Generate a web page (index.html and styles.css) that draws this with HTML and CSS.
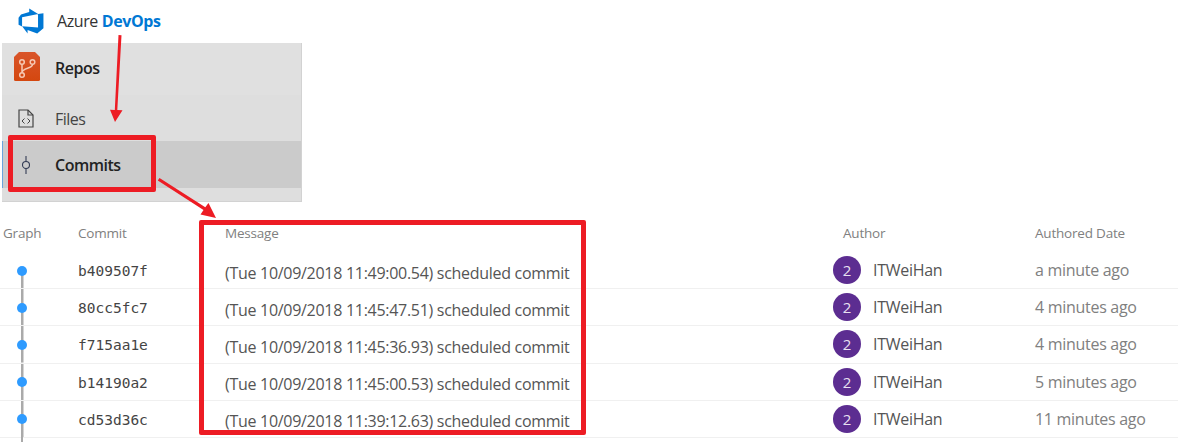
FILE: index.html
```html
<!DOCTYPE html>
<html lang="en">
<head>
<meta charset="utf-8">
<title>Azure DevOps commits</title>
<link rel="stylesheet" href="styles.css">
</head>
<body>
<header class="brand">
  <svg class="brand-logo" viewBox="0 0 18 18"><path fill="#0078d4" d="M17 4v9.74l-4 3.28-6.2-2.26V17l-3.51-4.59 10.23.8V4.44zm-3.41.49L7.85 1v2.29L2.58 4.84 1 6.87v4.61l2.26 1V6.57z"/></svg>
  <span class="brand-name">Azure <b>DevOps</b></span>
</header>
<nav class="nav">
  <div class="nav-item nav-repos">
    <svg class="repos-icon" viewBox="0 0 26 29">
      <defs><linearGradient id="repoFill" x1="0" y1="0" x2="0" y2="1"><stop offset="0" stop-color="#d9552a"/><stop offset="1" stop-color="#d4470f"/></linearGradient></defs>
      <path fill="url(#repoFill)" d="M5 0H21L26 5V27.500Q26 29 24.500 29H1.500Q0 29 0 27.500V5Z"/>
      <g fill="none" stroke="#f6c9b4" stroke-width="1.500">
        <circle cx="8" cy="10" r="2.300"/><circle cx="18.500" cy="10" r="2.300"/><circle cx="8" cy="23" r="2.300"/>
        <path d="M8 12.500V20.500M18.500 12.500C18.500 17 8.500 15.500 8 20.500"/>
      </g>
    </svg>
    <span class="nav-title">Repos</span>
  </div>
  <div class="nav-item nav-files">
    <svg class="files-icon" viewBox="0 0 16 19"><g fill="none" stroke="#444" stroke-width="1.200"><path d="M1 1H10L15 6V18H1Z"/><path d="M10 1V6H15"/><path d="M6.500 9.500L4 12L6.500 14.500M9.500 9.500L12 12L9.500 14.500" stroke-width="1"/></g></svg>
    <span class="nav-label">Files</span>
  </div>
  <div class="nav-item nav-commits">
    <svg class="commit-icon" viewBox="0 0 10 18"><g fill="none" stroke="#333c55" stroke-width="1.100"><circle cx="5" cy="9" r="3.500"/><path d="M5 0V5.500M5 12.500V18"/></g></svg>
    <span class="nav-current">Commits</span>
  </div>
  <div class="nav-foot"></div>
</nav>
<section class="commits">
  <div class="row head">
    <div class="c-graph"><span class="head-graph">Graph</span></div>
    <div class="c-commit head-font">Commit</div>
    <div class="c-message">Message</div>
    <div class="c-author"><span class="head-author">Author</span></div>
    <div class="c-date">Authored Date</div>
  </div>
  <div class="row item first">
    <div class="c-graph"><i class="dot"></i></div>
    <div class="c-commit">b409507f</div>
    <div class="c-message">(Tue 10/09/2018 11:49:00.54) scheduled commit</div>
    <div class="c-author"><span class="avatar">2</span>ITWeiHan</div>
    <div class="c-date">a minute ago</div>
  </div>
  <div class="row item">
    <div class="c-graph"><i class="dot"></i></div>
    <div class="c-commit">80cc5fc7</div>
    <div class="c-message">(Tue 10/09/2018 11:45:47.51) scheduled commit</div>
    <div class="c-author"><span class="avatar">2</span>ITWeiHan</div>
    <div class="c-date">4 minutes ago</div>
  </div>
  <div class="row item">
    <div class="c-graph"><i class="dot"></i></div>
    <div class="c-commit">f715aa1e</div>
    <div class="c-message">(Tue 10/09/2018 11:45:36.93) scheduled commit</div>
    <div class="c-author"><span class="avatar">2</span>ITWeiHan</div>
    <div class="c-date">4 minutes ago</div>
  </div>
  <div class="row item">
    <div class="c-graph"><i class="dot"></i></div>
    <div class="c-commit">b14190a2</div>
    <div class="c-message">(Tue 10/09/2018 11:45:00.53) scheduled commit</div>
    <div class="c-author"><span class="avatar">2</span>ITWeiHan</div>
    <div class="c-date">5 minutes ago</div>
  </div>
  <div class="row item last">
    <div class="c-graph"><i class="dot"></i></div>
    <div class="c-commit">cd53d36c</div>
    <div class="c-message">(Tue 10/09/2018 11:39:12.63) scheduled commit</div>
    <div class="c-author"><span class="avatar">2</span>ITWeiHan</div>
    <div class="c-date">11 minutes ago</div>
  </div>
</section>
<div class="mark mark-nav"></div>
<div class="mark mark-message"></div>
<svg class="arrows" viewBox="0 0 1178 448">
  <g fill="#ed1c24">
    <path d="M118.500 35L121.500 35.200L117.300 110L122.500 110.300L115 122L110 109.700L114.800 109.900Z"/>
    <path d="M159.500 178L157.800 180.500L203.500 210L200.500 214.500L216 218L208.500 203L205.300 207.300Z"/>
  </g>
</svg>
</body>
</html>
```
FILE: styles.css
```css
html, body {
  margin: 0;
  padding: 0;
  background: #fff;
}
body {
  position: relative;
  width: 1178px;
  height: 448px;
  overflow: hidden;
  font-family: "Open Sans", "Noto Sans", sans-serif;
  color: #333;
}
.brand {
  display: flex;
  align-items: center;
  height: 43px;
  padding-left: 17px;
  padding-bottom: 1px;
  box-sizing: border-box;
}
.brand-logo {
  width: 28px;
  height: 28px;
  margin-right: 12px;
}
.brand-name {
  font-size: 16px;
  color: #333;
  letter-spacing: -0.4px;
}
.brand-name b {
  color: #0078d4;
  font-weight: 700;
}
.nav {
  width: 299px;
  margin-left: 2px;
  height: 158px;
  background: #dedede;
  border-right: 1px solid #d2d2d2;
  border-bottom: 1px solid #d2d2d2;
  display: flex;
  flex-direction: column;
}
.nav-item {
  display: flex;
  align-items: center;
  font-size: 16px;
  letter-spacing: -0.5px;
}
.nav-repos {
  height: 52px;
  background: #e0e0e0;
  padding-left: 12px;
  padding-bottom: 3px;
  box-sizing: border-box;
}
.repos-icon {
  width: 26px;
  height: 29px;
  margin-right: 15px;
  margin-top: -2px;
}
.nav-title {
  font-weight: 600;
  color: #222;
}
.nav-files {
  height: 46px;
  padding-left: 16px;
  color: #444;
}
.nav-label {
  padding-top: 1px;
}
.files-icon {
  width: 16px;
  height: 19px;
  margin-right: 21px;
}
.nav-commits {
  height: 47px;
  background: #cbcbcb;
  padding-left: 19px;
  box-shadow: inset 1px 0 0 #6aa5dc;
}
.commit-icon {
  width: 10px;
  height: 18px;
  margin-right: 24px;
}
.nav-current {
  font-weight: 600;
  color: #222;
}
.nav-foot {
  flex: 1;
}
.commits {
  margin-top: 14px;
  font-size: 16px;
  letter-spacing: -0.29px;
  color: #555;
}
.row {
  display: grid;
  grid-template-columns: 78px 147px 608px 202px 143px;
  align-items: center;
}
.head {
  height: 36px;
  padding-bottom: 2px;
  box-sizing: border-box;
  font-size: 13.500px;
  color: #808080;
  letter-spacing: -0.2px;
}
.head-graph {
  padding-left: 3px;
}
.head-author {
  padding-left: 10px;
}
.item {
  height: 37.200px;
  box-sizing: border-box;
  border-bottom: 1px solid #f0f0f0;
}
.item .c-message {
  padding-top: 5px;
}
.c-graph {
  height: 100%;
  width: 44px;
  display: flex;
  align-items: center;
  justify-content: center;
  position: relative;
}
.head .c-graph {
  width: 78px;
  justify-content: flex-start;
}
.item .c-graph {
  background: linear-gradient(#aaa, #aaa) center / 2.500px 100% no-repeat;
}
.item.first .c-graph {
  background-size: 2.500px 50%;
  background-position: center bottom;
}
.item.last .c-graph::after {
  content: "";
  position: absolute;
  left: 20.750px;
  top: 100%;
  width: 2.500px;
  height: 5px;
  background: #aaa;
}
.dot {
  width: 10px;
  height: 10px;
  border-radius: 50%;
  background: #2e9bff;
  margin-top: 1px;
}
.item .c-commit {
  font-family: "DejaVu Sans Mono", "Liberation Mono", monospace;
  font-size: 14.500px;
  letter-spacing: 0;
  color: #444;
  padding-top: 2px;
}
.c-author {
  display: flex;
  align-items: center;
}
.avatar {
  width: 28px;
  height: 28px;
  border-radius: 50%;
  background: #5c2d91;
  color: #e8e0f0;
  font-size: 15px;
  display: flex;
  align-items: center;
  justify-content: center;
  margin-right: 12px;
}
.item .c-date {
  color: #808080;
}
.mark {
  position: absolute;
  box-sizing: border-box;
  border: 5px solid #ed1c24;
  border-radius: 2px;
}
.mark-nav {
  left: 8px;
  top: 135px;
  width: 148px;
  height: 57px;
}
.mark-message {
  left: 199px;
  top: 220px;
  width: 387px;
  height: 215px;
}
.arrows {
  position: absolute;
  left: 0;
  top: 0;
  width: 1178px;
  height: 448px;
  pointer-events: none;
}
```
